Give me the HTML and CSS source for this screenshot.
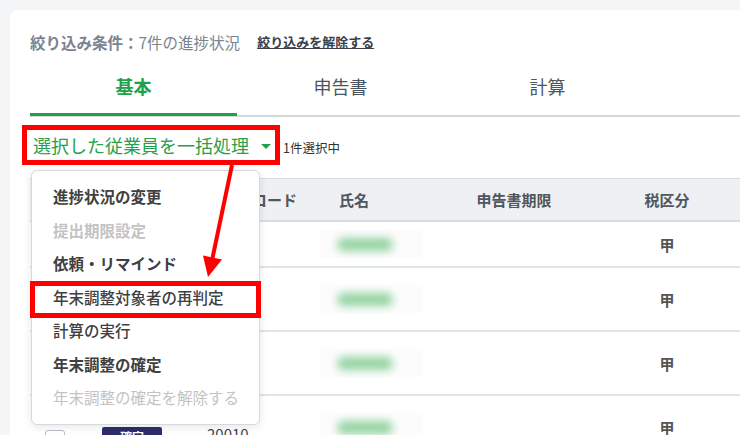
FILE: index.html
```html
<!DOCTYPE html>
<html lang="ja">
<head>
<meta charset="utf-8">
<title>進捗状況</title>
<link rel="stylesheet" href="styles.css">
</head>
<body>
<main class="card">
  <p class="filter"><b>絞り込み条件：</b>7件の進捗状況<a class="filter-clear" href="#">絞り込みを解除する</a></p>

  <nav class="tabs">
    <a class="tab is-active">基本</a>
    <a class="tab">申告書</a>
    <a class="tab">計算</a>
  </nav>

  <div class="toolbar">
    <div class="bulk">
      <button class="bulk-btn" type="button">選択した従業員を一括処理<span class="caret"></span></button>
      <ul class="menu">
        <li class="menu-item">進捗状況の変更</li>
        <li class="menu-item is-disabled">提出期限設定</li>
        <li class="menu-item">依頼・リマインド</li>
        <li class="menu-item is-medium is-marked">年末調整対象者の再判定</li>
        <li class="menu-item is-medium">計算の実行</li>
        <li class="menu-item">年末調整の確定</li>
        <li class="menu-item is-disabled is-plain">年末調整の確定を解除する</li>
      </ul>
    </div>
    <span class="selected-count">1件選択中</span>
  </div>

  <div class="table">
    <div class="tr th">
      <div class="td"></div>
      <div class="td">状況</div>
      <div class="td code">従業員コード</div>
      <div class="td name-head">氏名</div>
      <div class="td center">申告書期限</div>
      <div class="td center">税区分</div>
      <div class="td"></div>
    </div>

    <div class="tr row-short">
      <div class="td"><span class="check"></span></div>
      <div class="td"><span class="badge">未提出</span></div>
      <div class="td code">20003</div>
      <div class="td"><span class="name-mask"><span class="name-blur"></span></span></div>
      <div class="td center"></div>
      <div class="td center tax">甲</div>
      <div class="td"></div>
    </div>

    <div class="tr row-tall">
      <div class="td top"><span class="check"></span></div>
      <div class="td top"><span class="badge">確定</span></div>
      <div class="td top code">20006</div>
      <div class="td"><span class="name-mask"><span class="name-blur"></span></span></div>
      <div class="td center"></div>
      <div class="td center tax">甲</div>
      <div class="td"></div>
    </div>

    <div class="tr row-tall">
      <div class="td top"><span class="check"></span></div>
      <div class="td top"><span class="badge">確定</span></div>
      <div class="td top code">20008</div>
      <div class="td"><span class="name-mask"><span class="name-blur"></span></span></div>
      <div class="td center"></div>
      <div class="td center tax">甲</div>
      <div class="td"></div>
    </div>

    <div class="tr row-tall">
      <div class="td top"><span class="check"></span></div>
      <div class="td top"><span class="badge">確定</span></div>
      <div class="td top code">20010</div>
      <div class="td"><span class="name-mask"><span class="name-blur"></span></span></div>
      <div class="td center"></div>
      <div class="td center tax">甲</div>
      <div class="td"></div>
    </div>
  </div>
</main>

<!-- callout arrow from the bulk button down to the chosen action -->
<svg class="callout" width="740" height="435" viewBox="0 0 740 435">
  <line x1="232" y1="165" x2="212.5" y2="258" stroke="#f00" stroke-width="4"/>
  <polygon points="203,255.5 222,259.5 208,277" fill="#f00"/>
</svg>
</body>
</html>
```

FILE: styles.css
```css
* {
  box-sizing: border-box;
}

html,
body {
  margin: 0;
}

body {
  position: relative;
  width: 740px;
  height: 435px;
  overflow: hidden;
  background: #f4f5f7;
  font-family: "Noto Sans CJK JP", "Noto Sans", sans-serif;
  color: #333;
}

/* white panel */
.card {
  width: 800px;
  height: 520px;
  margin: 10px 0 0 10px;
  padding: 22px 0 0 20px;
  background: #fff;
  border-radius: 8px 0 0 0;
}

/* filter summary line */
.filter {
  display: flex;
  align-items: center;
  height: 20px;
  margin: 0;
  font-size: 15.5px;
  line-height: 20px;
  color: #7a8591;
  white-space: nowrap;
}

.filter b {
  font-weight: 700;
}

.filter-clear {
  margin-left: 17px;
  font-size: 13px;
  font-weight: 700;
  color: #3a4048;
  text-decoration: underline;
}

/* tabs */
.tabs {
  display: flex;
  margin-top: 6px;
  border-bottom: 2px solid #d3d7dc;
}

.tab {
  position: relative;
  width: 207px;
  padding: 16px 0 17px;
  font-size: 18px;
  line-height: 24px;
  text-align: center;
  color: #4b5560;
}

.tab.is-active {
  color: #21a04a;
  font-weight: 700;
}

.tab.is-active::after {
  content: "";
  position: absolute;
  left: 0;
  right: 0;
  bottom: -1px;
  height: 3px;
  background: #21a04a;
}

/* bulk action toolbar */
.toolbar {
  display: flex;
  align-items: center;
  gap: 8px;
  margin-top: 13px;
}

.bulk {
  position: relative;
  margin-left: -3px;
}

.bulk-btn {
  display: flex;
  align-items: center;
  gap: 12px;
  height: 30px;
  padding: 0 4px 0 6px;
  border: 0;
  background: none;
  font-family: inherit;
  font-size: 18px;
  line-height: 30px;
  color: #27a04a;
  outline: 5px solid #f00;
}

.caret {
  width: 0;
  height: 0;
  margin-top: 3px;
  border-left: 5px solid transparent;
  border-right: 5px solid transparent;
  border-top: 5px solid #27a04a;
}

.selected-count {
  margin-top: 4px;
  font-size: 12.5px;
  color: #333;
}

/* dropdown */
.menu {
  position: absolute;
  top: 40px;
  left: 4px;
  z-index: 2;
  width: 229px;
  margin: 0;
  padding: 9px 0;
  list-style: none;
  background: #fff;
  border: 1px solid #d6d9de;
  border-radius: 6px;
  box-shadow: 0 2px 8px rgba(0, 0, 0, 0.1);
}

.menu-item {
  position: relative;
  height: 33.5px;
  padding-left: 21px;
  font-size: 15.5px;
  line-height: 33.5px;
  font-weight: 700;
  color: #404040;
  white-space: nowrap;
}

.menu-item.is-medium {
  font-weight: 500;
}

.menu-item.is-plain {
  font-weight: 400;
}

.menu-item.is-disabled {
  color: #c3c3c3;
}

.menu-item.is-marked::after {
  content: "";
  position: absolute;
  top: 0;
  bottom: -4px;
  left: -2px;
  right: -2px;
  border: 5px solid #f00;
}

/* employee table */
.table {
  width: 780px;
  margin-top: 18px;
}

.tr {
  display: grid;
  grid-template-columns: 60px 85px 145px 125px 138px 168px 1fr;
  align-items: center;
  border-bottom: 2px solid #e0e3e8;
}

.th {
  height: 44px;
  background: #eef0f3;
  border-top: 1px solid #d8dbe0;
  border-bottom: 2px solid #d8dbe0;
  font-size: 15px;
  font-weight: 700;
  color: #50565d;
}

.row-short {
  height: 46px;
}

.row-tall {
  height: 64px;
}

.td.top {
  align-self: start;
  padding-top: 28px;
}

.center {
  text-align: center;
}

.code {
  padding-left: 32px;
  font-size: 15px;
  line-height: 20px;
  color: #444;
}

.th .code {
  color: #50565d;
}

.name-head {
  padding-left: 19px;
}

.check {
  display: block;
  width: 20px;
  height: 20px;
  margin: 6px 0 0 15px;
  border: 1px solid #b6bcc4;
  border-radius: 3px;
}

.badge {
  display: block;
  width: 60px;
  height: 20px;
  margin: 3px 0 0 12px;
  background: #2e2c6b;
  border-radius: 2px;
  font-size: 12px;
  font-weight: 700;
  line-height: 20px;
  text-align: center;
  color: #fff;
}

.name-mask {
  display: flex;
  align-items: center;
  width: 103px;
  height: 28px;
  padding-left: 17px;
  background: #fcfcfc;
}

.name-blur {
  width: 56px;
  height: 13px;
  border-radius: 7px;
  background: #93d2a1;
  filter: blur(4px);
}

.tax {
  font-size: 15px;
  font-weight: 700;
  color: #555;
}

/* annotation layer */
.callout {
  position: absolute;
  top: 0;
  left: 0;
  z-index: 5;
  pointer-events: none;
}
```
